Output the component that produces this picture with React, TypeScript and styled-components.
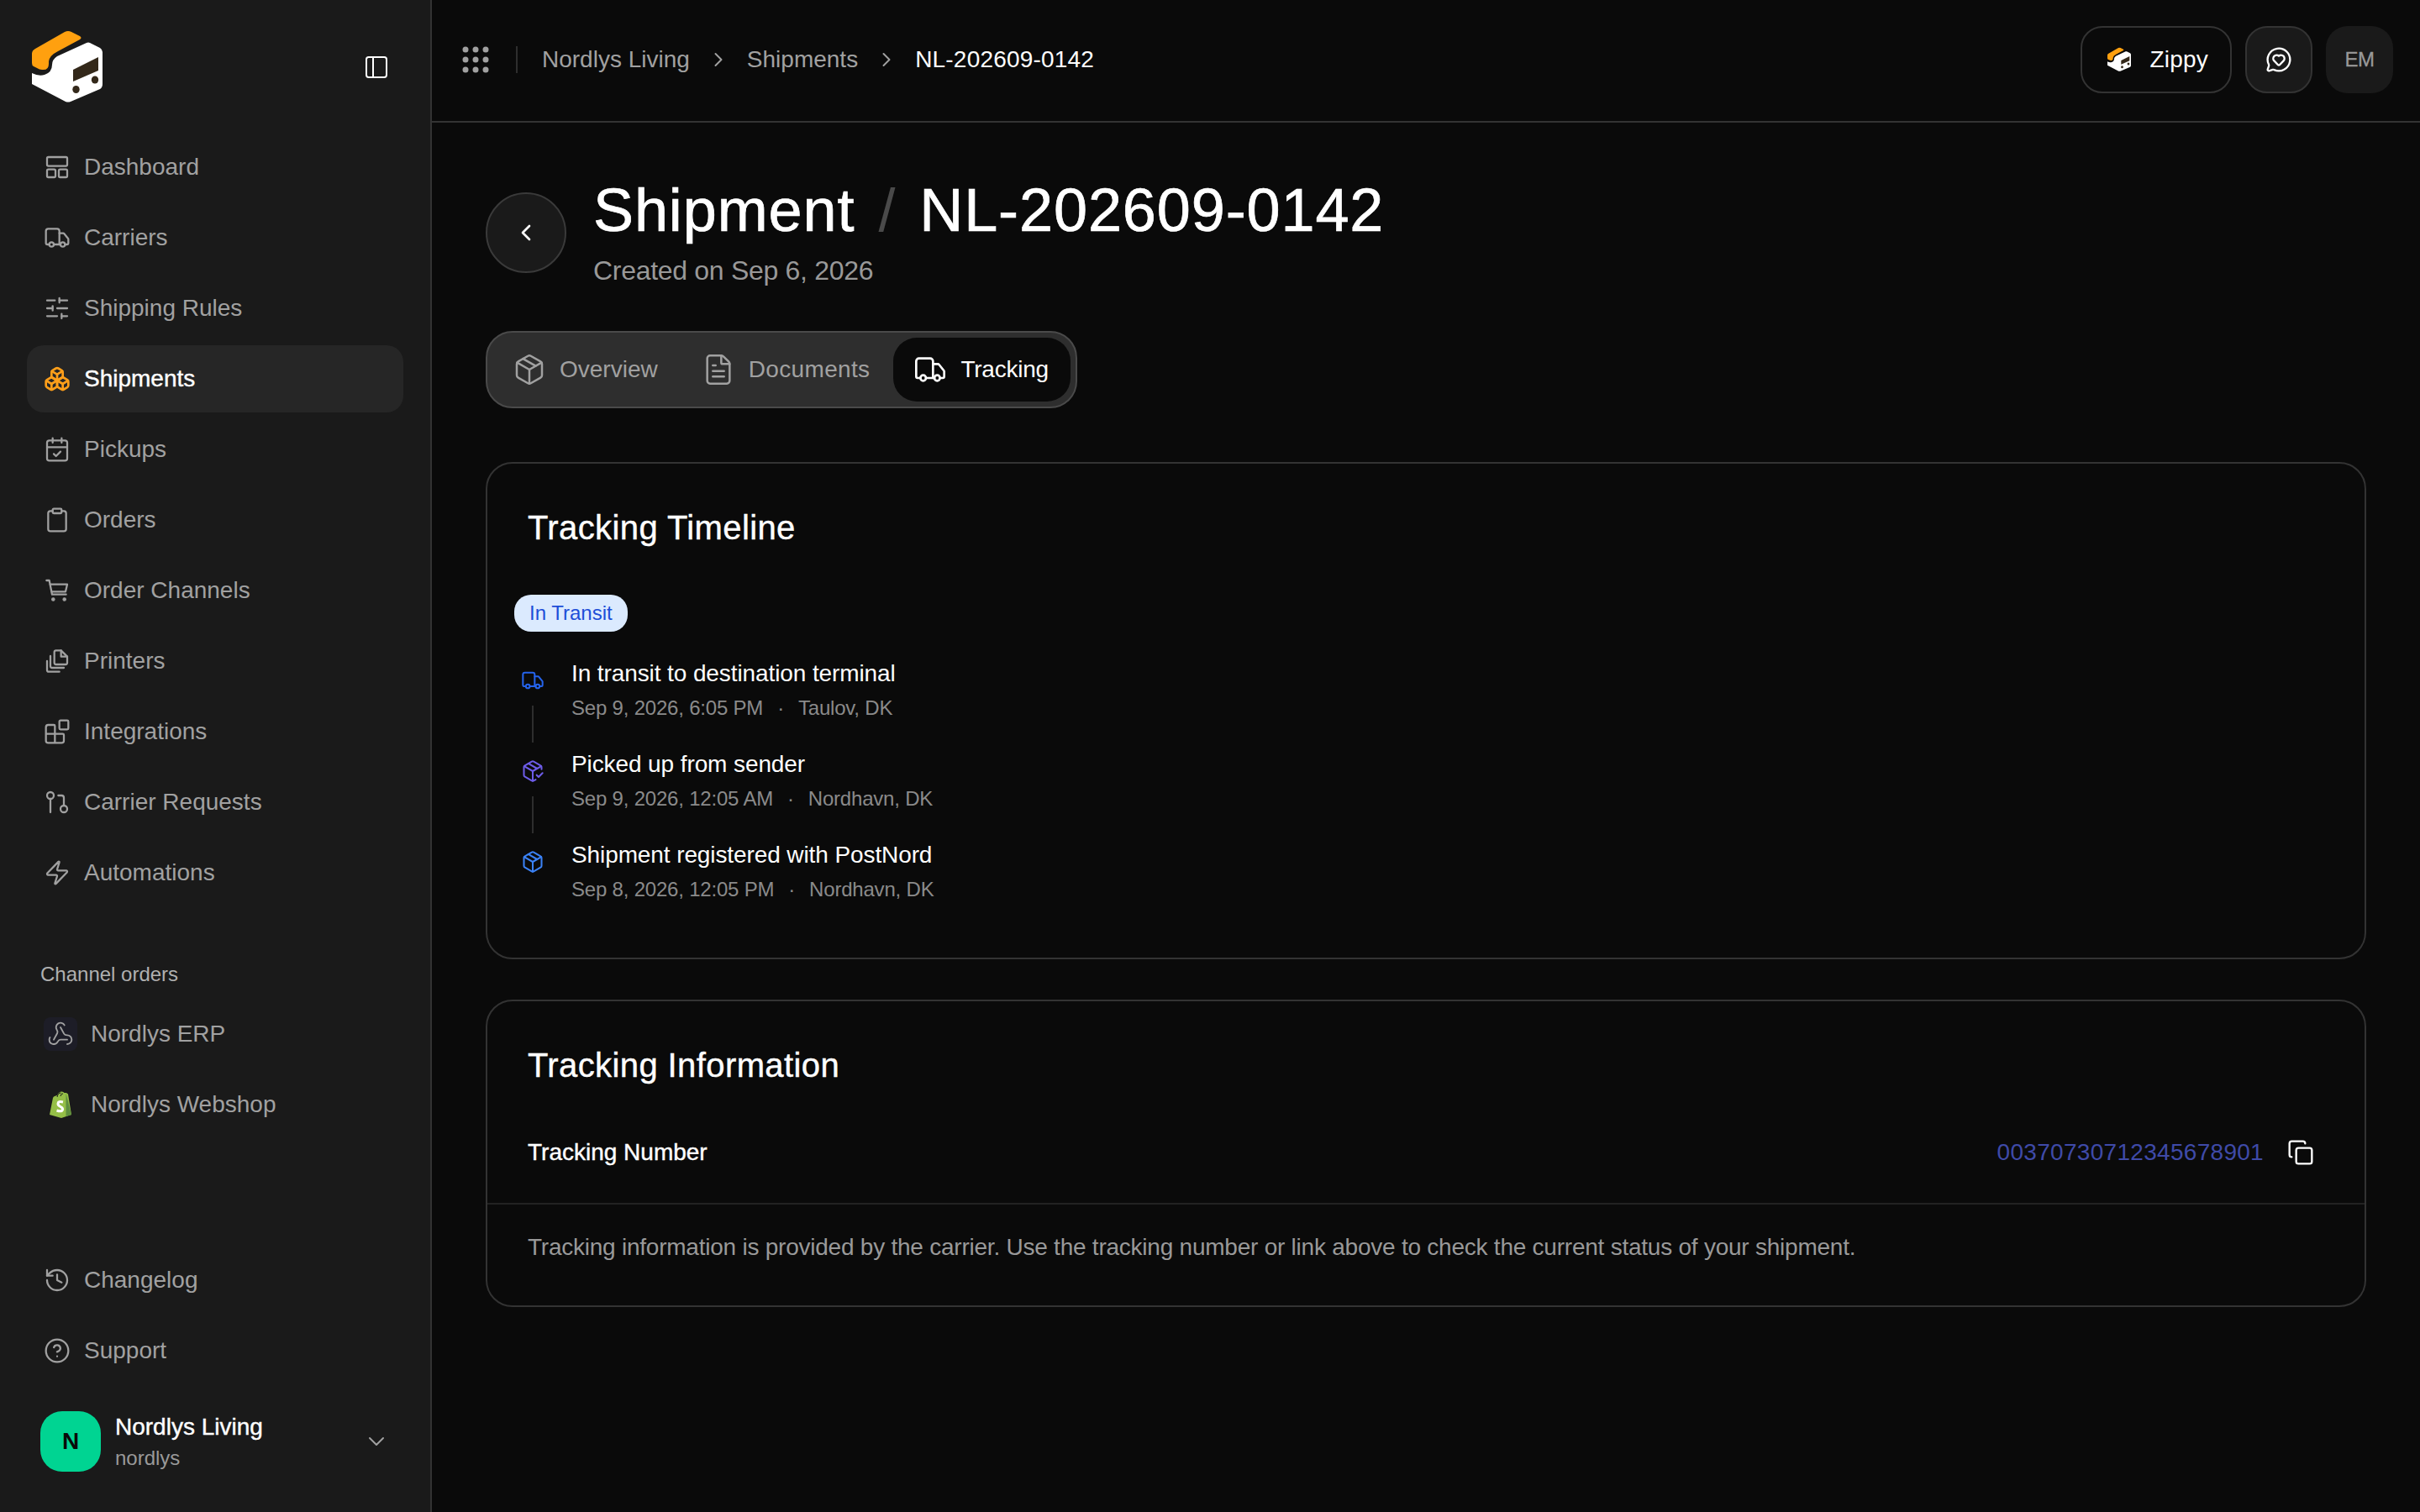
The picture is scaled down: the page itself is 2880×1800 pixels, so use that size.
import React from 'react'
import styled, { createGlobalStyle } from 'styled-components'
import {
  Blocks,
  Boxes,
  CalendarCheck,
  ChevronDown,
  ChevronLeft,
  ChevronRight,
  CircleHelp,
  Clipboard,
  Copy,
  FileText,
  GitPullRequest,
  History,
  MessageCircleHeart,
  Package,
  PackageCheck,
  PanelLeft,
  SlidersHorizontal,
  Truck,
  Webhook,
  Zap,
} from 'lucide-react'

const GlobalStyle = createGlobalStyle`
  * {
    box-sizing: border-box;
  }

  html,
  body {
    margin: 0;
    background: #0a0a0a;
  }

  body {
    font-family: 'Liberation Sans', Arial, sans-serif;
    color: #fff;
  }
`

const Shell = styled.div`
  display: flex;
  width: 2880px;
  height: 1800px;
  overflow: hidden;
  background: #0a0a0a;
`

const Sidebar = styled.aside`
  display: flex;
  flex-direction: column;
  flex: none;
  width: 514px;
  height: 100%;
  padding: 32px 32px 46px;
  background: #1a1a1a;
  border-right: 2px solid #333;
`

const LogoRow = styled.div`
  display: flex;
  align-items: center;
  justify-content: space-between;
  height: 96px;
  margin-bottom: 31px;
  color: #fff;
`

const ToggleButton = styled.div`
  display: flex;
  margin-right: 16px;
`

const NavList = styled.nav`
  display: flex;
  flex-direction: column;
  gap: 4px;
`

const NavItem = styled.div<{ $active?: boolean }>`
  display: flex;
  align-items: center;
  gap: 16px;
  height: 80px;
  padding-left: 20px;
  border-radius: 20px;
  font-size: 28px;
  background: ${({ $active }) => ($active ? '#262626' : 'transparent')};
  color: ${({ $active }) => ($active ? '#fff' : '#a1a1a1')};
  -webkit-text-stroke: ${({ $active }) => ($active ? '0.4px' : '0')};

  svg {
    flex: none;
    color: ${({ $active }) => ($active ? '#ff9f1a' : '#a1a1a1')};
  }
`

const SectionLabel = styled.div`
  margin: 65px 0 15px 16px;
  font-size: 24px;
  line-height: 32px;
  color: #b0b0b0;
`

const ChannelIcon = styled.span<{ $boxed?: boolean }>`
  display: flex;
  flex: none;
  align-items: center;
  justify-content: center;
  width: 40px;
  height: 40px;
  border-radius: 8px;
  background: ${({ $boxed }) => ($boxed ? '#1d1d27' : 'transparent')};
`

const SidebarFooter = styled.div`
  display: flex;
  flex-direction: column;
  gap: 4px;
  margin-top: auto;
`

const AccountRow = styled.div`
  display: flex;
  align-items: center;
  margin-top: 25px;
  padding: 0 16px;
`

const Avatar = styled.div`
  display: flex;
  flex: none;
  align-items: center;
  justify-content: center;
  width: 72px;
  height: 72px;
  border-radius: 26px;
  background: #00d492;
  color: #0a0a0a;
  font-size: 28px;
  font-weight: 700;
`

const AccountText = styled.div`
  display: flex;
  flex: 1;
  flex-direction: column;
  margin-left: 17px;
  padding-top: 3px;
`

const AccountName = styled.div`
  font-size: 28px;
  line-height: 38px;
  color: #fff;
  -webkit-text-stroke: 0.4px;
`

const AccountSlug = styled.div`
  font-size: 24px;
  line-height: 36px;
  color: #999;
`

const AccountChevron = styled.div`
  display: flex;
  color: #a1a1a1;
`

const Main = styled.main`
  display: flex;
  flex: 1;
  flex-direction: column;
  min-width: 0;
`

const TopBar = styled.header`
  display: flex;
  flex: none;
  align-items: center;
  height: 146px;
  padding: 0 32px 2px 36px;
  border-bottom: 2px solid #333;
`

const GridIcon = styled.svg`
  flex: none;
  color: #a1a1a1;
`

const BarDivider = styled.span`
  width: 2px;
  height: 32px;
  margin: 0 29px 0 32px;
  background: #2e2e2e;
`

const Breadcrumbs = styled.div`
  display: flex;
  flex: 1;
  align-items: center;
  gap: 20px;
  font-size: 28px;
  color: #a1a1a1;

  svg {
    color: #a1a1a1;
  }
`

const Crumb = styled.span<{ $current?: boolean }>`
  letter-spacing: ${({ $current }) => ($current ? '0.2px' : '0')};
  color: ${({ $current }) => ($current ? '#fff' : '#a1a1a1')};
`

const BarActions = styled.div`
  display: flex;
  align-items: center;
  gap: 16px;
`

const ZippyButton = styled.div`
  display: flex;
  align-items: center;
  gap: 21px;
  height: 80px;
  padding: 0 26px 0 28px;
  border: 2px solid #333;
  border-radius: 26px;
  font-size: 28px;
  letter-spacing: 0.2px;
  color: #fff;
`

const SquareButton = styled.div<{ $outlined?: boolean }>`
  display: flex;
  align-items: center;
  justify-content: center;
  width: 80px;
  height: 80px;
  border-radius: 26px;
  background: #1a1a1a;
  border: ${({ $outlined }) => ($outlined ? '2px solid #333' : '0')};
  color: #fff;
`

const Initials = styled.span`
  font-size: 24px;
  letter-spacing: -0.4px;
  color: #999;
  -webkit-text-stroke: 0.3px;
`

const Content = styled.div`
  display: flex;
  flex-direction: column;
  padding: 64px 64px 0;
`

const PageHeader = styled.div`
  display: flex;
  align-items: center;
  gap: 32px;
`

const BackButton = styled.div`
  display: flex;
  flex: none;
  align-items: center;
  justify-content: center;
  width: 96px;
  height: 96px;
  border: 2px solid #3a3a3a;
  border-radius: 50%;
  background: #1a1a1a;
  color: #fff;
`

const TitleBlock = styled.div`
  display: flex;
  flex-direction: column;
  gap: 10px;
`

const Title = styled.h1`
  display: flex;
  gap: 28px;
  margin: 0;
  font-size: 72px;
  font-weight: 400;
  line-height: 80px;
  letter-spacing: 0.9px;
  -webkit-text-stroke: 0.7px;
  color: #fff;
`

const TitleSlash = styled.span`
  color: #4a4a4a;
  -webkit-text-stroke: 0;
`

const Subtitle = styled.div`
  font-size: 32px;
  line-height: 44px;
  letter-spacing: -0.3px;
  color: #999;
`

const TabBar = styled.div`
  display: inline-flex;
  align-self: flex-start;
  gap: 2px;
  margin: 50px 0 64px;
  padding: 6px;
  border: 2px solid #4a4a4a;
  border-radius: 32px;
  background: #2e2e2e;
`

const Tab = styled.div<{ $active?: boolean; $spacing?: number }>`
  display: flex;
  align-items: center;
  gap: 16px;
  height: 76px;
  padding: 0 26px 0 24px;
  border-radius: 28px;
  font-size: 28px;
  letter-spacing: ${({ $spacing }) => $spacing ?? 0}px;
  background: ${({ $active }) => ($active ? '#0a0a0a' : 'transparent')};
  color: ${({ $active }) => ($active ? '#fff' : '#a1a1a1')};
`

const Card = styled.section`
  display: flex;
  flex-direction: column;
  margin-bottom: 48px;
  border: 2px solid #333;
  border-radius: 32px;
`

const CardTitle = styled.h2`
  margin: 0;
  padding: 52px 48px 0;
  font-size: 40px;
  font-weight: 400;
  line-height: 48px;
  letter-spacing: 0.4px;
  -webkit-text-stroke: 0.4px;
  color: #fff;
`

const TimelineBody = styled.div`
  display: flex;
  flex-direction: column;
  align-items: flex-start;
  padding: 56px 32px 32px;
`

const StatusBadge = styled.span`
  display: flex;
  align-items: center;
  height: 44px;
  margin-bottom: 32px;
  padding: 0 18px;
  border-radius: 20px;
  background: #dbeafe;
  color: #1d4ed8;
  font-size: 24px;
`

const TimelineRow = styled.div`
  display: flex;
  gap: 24px;
  height: 108px;
`

const RailColumn = styled.div<{ $color: string }>`
  display: flex;
  flex-direction: column;
  align-items: center;
  width: 44px;
  padding-top: 12px;
  color: ${({ $color }) => $color};
`

const RailLine = styled.span`
  width: 2px;
  height: 44px;
  margin-top: 16px;
  background: #2e2e2e;
`

const EventText = styled.div`
  display: flex;
  flex-direction: column;
  gap: 7px;
`

const EventTitle = styled.div`
  font-size: 28px;
  line-height: 36px;
  letter-spacing: -0.1px;
  color: #fff;
`

const EventMeta = styled.div`
  display: flex;
  gap: 17px;
  font-size: 24px;
  line-height: 32px;
  letter-spacing: -0.2px;
  color: #8a8a8a;
`

const InfoRow = styled.div`
  display: flex;
  align-items: center;
  justify-content: space-between;
  padding: 62px 60px 42px 48px;
  border-bottom: 2px solid #222;
`

const InfoLabel = styled.span`
  font-size: 28px;
  line-height: 36px;
  color: #fff;
  -webkit-text-stroke: 0.4px;
`

const InfoValue = styled.div`
  display: flex;
  align-items: center;
  gap: 28px;
  color: #fff;
`

const TrackingNumber = styled.span`
  font-size: 28px;
  line-height: 36px;
  letter-spacing: 0.3px;
  color: #3f4aa8;
`

const CardNote = styled.p`
  margin: 0;
  padding: 31px 48px 49px;
  font-size: 28px;
  line-height: 40px;
  letter-spacing: -0.235px;
  color: #999;
`

const Logo = ({ size }: { size: number }) => (
  <svg width={size} height={size} viewBox="32 32 96 96" fill="none">
    <path
      fill="#ffa00f"
      d="M38 64q0-4 4-6l35-20q4-2 8 0l10 5q3 2 0 4L69 61q-10 5-11 12v3q0 8-8 7q-3 0-6-2l-4-2q-2-1-2-4z"
    />
    <path
      fill="#fff"
      d="M107 51l12 6q3 2 3 5v38q0 4-3 6l-35 15q-3 1-6 0l-40-21q-0-1-0-3V87q8 4 15 2q9-3 9-12q0-6 6-10l35-16q2-1 4 0z"
    />
    <path fill="#33281a" d="M87 83l30-15v16l-30 13z" />
    <ellipse cx="90.5" cy="106.5" rx="4.2" ry="4.6" fill="#33281a" />
    <ellipse cx="113" cy="95" rx="4.2" ry="4.6" fill="#33281a" />
  </svg>
)

const ShopifyBag = () => (
  <svg width="32" height="34" viewBox="0 0 32 34" fill="none">
    <path fill="#95bf47" d="M3 29L7 9q.5-1.5 2-2l3-1q2-4.500 5.500-4.500q2 0 3 1.500L23 3l2 1.500L29 29l-12 4z" />
    <path fill="#5e8e3e" d="M22.500 3.500L29 29l-6.500 2z" />
    <path stroke="#1a1a1a" strokeWidth="1" d="M12 8q1-5 4.500-5M16 7q1-4 3-3" />
    <path stroke="#fff" strokeWidth="3" d="M19 14q-6-1.500-6 2q0 2 3 3.500t2.500 3.500q-1 3-7 1" />
  </svg>
)

const PrintersIcon = () => (
  <svg width="32" height="32" viewBox="0 0 24 24" fill="none" stroke="currentColor" strokeWidth="1.7" strokeLinejoin="round" strokeLinecap="round">
    <path d="M11 2.500h4.500l5.500 5.500v5.500a1.500 1.500 0 0 1-1.500 1.500H11a1.500 1.500 0 0 1-1.500-1.500V4A1.500 1.500 0 0 1 11 2.500z" />
    <path d="M15.500 2.500V8H21" />
    <path d="M6 7.500v9A1.500 1.500 0 0 0 7.500 18H18" />
    <path d="M3 12v8a1.500 1.500 0 0 0 1.500 1.500H14" />
  </svg>
)

const DashboardIcon = () => (
  <svg width="32" height="32" viewBox="0 0 24 24" fill="none" stroke="currentColor" strokeWidth="1.7" strokeLinejoin="round">
    <rect x="3" y="3" width="18" height="8" rx="1.200" />
    <rect x="3" y="14" width="7.500" height="7" rx="1.200" />
    <rect x="13.500" y="14" width="7.500" height="7" rx="1.200" />
  </svg>
)

const CartIcon = () => (
  <svg width="32" height="32" viewBox="0 0 24 24" fill="none" stroke="currentColor" strokeWidth="1.7" strokeLinejoin="round" strokeLinecap="round">
    <path d="M2.500 3H5l2.500 12.500H20" />
    <path d="M5.800 6.500H21L19.500 13H7.100" />
    <circle cx="8.500" cy="19.800" r="1.300" fill="currentColor" strokeWidth="0.8" />
    <circle cx="18.500" cy="19.800" r="1.300" fill="currentColor" strokeWidth="0.8" />
  </svg>
)

const iconProps = { size: 32, strokeWidth: 1.7 }

const navItems = [
  { label: 'Dashboard', icon: <DashboardIcon /> },
  { label: 'Carriers', icon: <Truck {...iconProps} /> },
  { label: 'Shipping Rules', icon: <SlidersHorizontal {...iconProps} /> },
  { label: 'Shipments', icon: <Boxes size={32} strokeWidth={2} />, active: true },
  { label: 'Pickups', icon: <CalendarCheck {...iconProps} /> },
  { label: 'Orders', icon: <Clipboard {...iconProps} /> },
  { label: 'Order Channels', icon: <CartIcon /> },
  { label: 'Printers', icon: <PrintersIcon /> },
  { label: 'Integrations', icon: <Blocks {...iconProps} /> },
  { label: 'Carrier Requests', icon: <GitPullRequest {...iconProps} /> },
  { label: 'Automations', icon: <Zap {...iconProps} /> },
]

const events = [
  {
    title: 'In transit to destination terminal',
    when: 'Sep 9, 2026, 6:05 PM',
    where: 'Taulov, DK',
    color: '#2563eb',
    icon: <Truck size={28} strokeWidth={1.75} />,
  },
  {
    title: 'Picked up from sender',
    when: 'Sep 9, 2026, 12:05 AM',
    where: 'Nordhavn, DK',
    color: '#6d5ce7',
    icon: <PackageCheck size={28} strokeWidth={1.75} />,
  },
  {
    title: 'Shipment registered with PostNord',
    when: 'Sep 8, 2026, 12:05 PM',
    where: 'Nordhavn, DK',
    color: '#3b82f6',
    icon: <Package size={28} strokeWidth={1.75} />,
  },
]

const App = () => (
  <>
    <GlobalStyle />
    <Shell>
      <Sidebar>
        <LogoRow>
          <Logo size={96} />
          <ToggleButton>
            <PanelLeft size={32} strokeWidth={1.5} />
          </ToggleButton>
        </LogoRow>
        <NavList>
          {navItems.map((item) => (
            <NavItem key={item.label} $active={item.active}>
              {item.icon}
              {item.label}
            </NavItem>
          ))}
        </NavList>
        <SectionLabel>Channel orders</SectionLabel>
        <NavList>
          <NavItem>
            <ChannelIcon $boxed>
              <Webhook size={32} strokeWidth={1.4} />
            </ChannelIcon>
            Nordlys ERP
          </NavItem>
          <NavItem>
            <ChannelIcon>
              <ShopifyBag />
            </ChannelIcon>
            Nordlys Webshop
          </NavItem>
        </NavList>
        <SidebarFooter>
          <NavItem>
            <History {...iconProps} />
            Changelog
          </NavItem>
          <NavItem>
            <CircleHelp {...iconProps} />
            Support
          </NavItem>
          <AccountRow>
            <Avatar>N</Avatar>
            <AccountText>
              <AccountName>Nordlys Living</AccountName>
              <AccountSlug>nordlys</AccountSlug>
            </AccountText>
            <AccountChevron>
              <ChevronDown size={32} strokeWidth={1.5} />
            </AccountChevron>
          </AccountRow>
        </SidebarFooter>
      </Sidebar>
      <Main>
        <TopBar>
          <GridIcon width="32" height="32" viewBox="0 0 32 32" fill="currentColor">
            {[4, 16, 28].map((cy) =>
              [4, 16, 28].map((cx) => <circle key={`${cx}-${cy}`} cx={cx} cy={cy} r="3.500" />),
            )}
          </GridIcon>
          <BarDivider />
          <Breadcrumbs>
            <Crumb>Nordlys Living</Crumb>
            <ChevronRight size={28} strokeWidth={1.7} />
            <Crumb>Shipments</Crumb>
            <ChevronRight size={28} strokeWidth={1.7} />
            <Crumb $current>NL-202609-0142</Crumb>
          </Breadcrumbs>
          <BarActions>
            <ZippyButton>
              <Logo size={32} />
              Zippy
            </ZippyButton>
            <SquareButton $outlined>
              <MessageCircleHeart size={32} strokeWidth={1.75} />
            </SquareButton>
            <SquareButton>
              <Initials>EM</Initials>
            </SquareButton>
          </BarActions>
        </TopBar>
        <Content>
          <PageHeader>
            <BackButton>
              <ChevronLeft size={32} strokeWidth={2} />
            </BackButton>
            <TitleBlock>
              <Title>
                <span>Shipment</span>
                <TitleSlash>/</TitleSlash>
                <span>NL-202609-0142</span>
              </Title>
              <Subtitle>Created on Sep 6, 2026</Subtitle>
            </TitleBlock>
          </PageHeader>
          <TabBar>
            <Tab>
              <Package size={40} strokeWidth={1.5} />
              Overview
            </Tab>
            <Tab $spacing={0.35}>
              <FileText size={40} strokeWidth={1.5} />
              Documents
            </Tab>
            <Tab $active $spacing={-0.25}>
              <Truck size={40} strokeWidth={1.6} />
              Tracking
            </Tab>
          </TabBar>
          <Card>
            <CardTitle>Tracking Timeline</CardTitle>
            <TimelineBody>
              <StatusBadge>In Transit</StatusBadge>
              {events.map((event, index) => (
                <TimelineRow key={event.title}>
                  <RailColumn $color={event.color}>
                    {event.icon}
                    {index < events.length - 1 && <RailLine />}
                  </RailColumn>
                  <EventText>
                    <EventTitle>{event.title}</EventTitle>
                    <EventMeta>
                      <span>{event.when}</span>
                      <span>·</span>
                      <span>{event.where}</span>
                    </EventMeta>
                  </EventText>
                </TimelineRow>
              ))}
            </TimelineBody>
          </Card>
          <Card>
            <CardTitle>Tracking Information</CardTitle>
            <InfoRow>
              <InfoLabel>Tracking Number</InfoLabel>
              <InfoValue>
                <TrackingNumber>00370730712345678901</TrackingNumber>
                <Copy size={32} strokeWidth={1.75} />
              </InfoValue>
            </InfoRow>
            <CardNote>
              Tracking information is provided by the carrier. Use the tracking number or link above to check the
              current status of your shipment.
            </CardNote>
          </Card>
        </Content>
      </Main>
    </Shell>
  </>
)

export default App
